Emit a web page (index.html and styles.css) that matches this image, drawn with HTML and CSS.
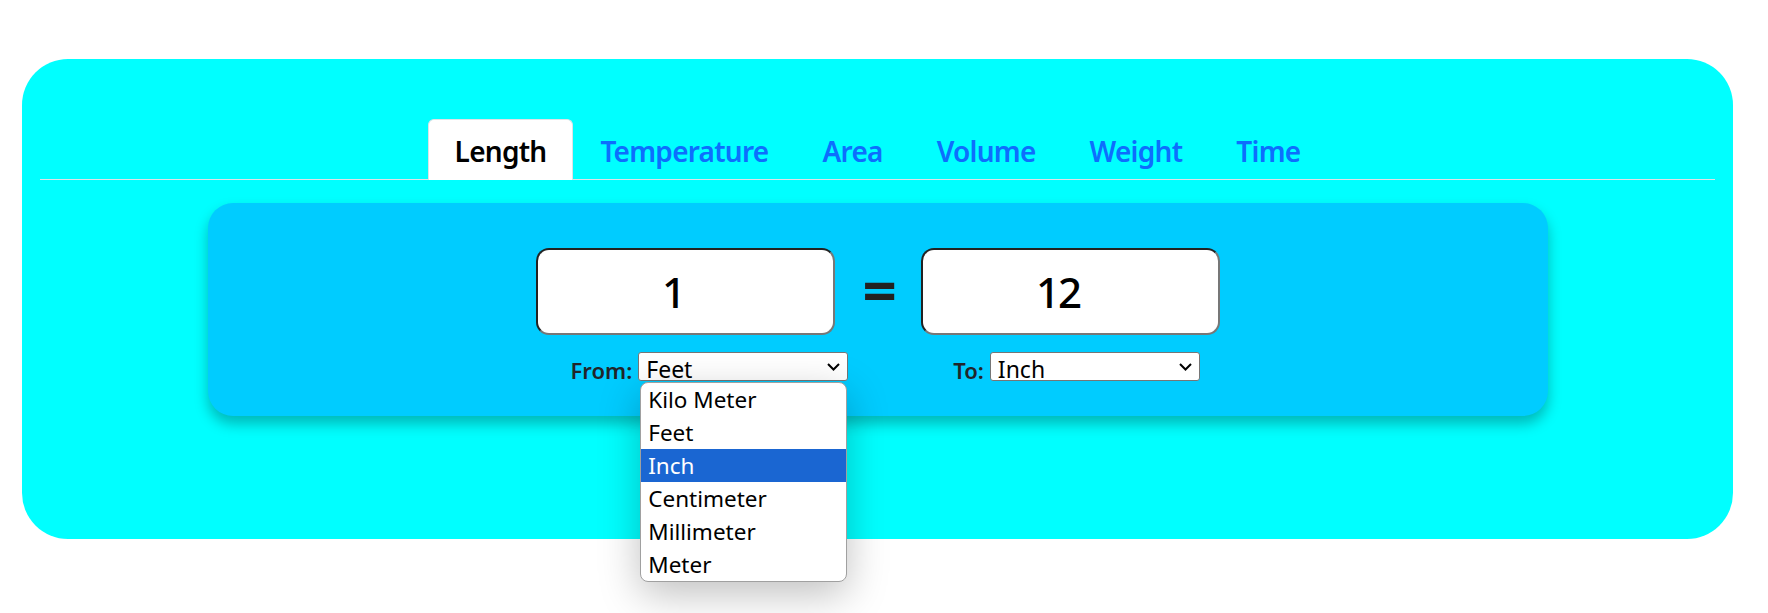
FILE: index.html
```html
<!DOCTYPE html>
<html lang="en">
<head>
<meta charset="utf-8">
<title>Unit Converter</title>
<link rel="stylesheet" href="styles.css">
</head>
<body>
<div class="app">
  <nav class="tabs">
    <a class="tab active">Length</a>
    <a class="tab">Temperature</a>
    <a class="tab">Area</a>
    <a class="tab">Volume</a>
    <a class="tab">Weight</a>
    <a class="tab">Time</a>
  </nav>
  <section class="panel">
    <div class="values">
      <div class="num">1</div>
      <div class="eq">=</div>
      <div class="num">12</div>
    </div>
    <div class="units">
      <div class="group">
        <span class="lbl">From:</span>
        <div class="sel">
          <span class="sel-text">Feet</span>
          <svg class="chev" width="13" height="8" viewBox="0 0 13 8"><path d="M1 1 L6.5 6.5 L12 1" fill="none" stroke="#000" stroke-width="2"/></svg>
          <ul class="dropdown">
            <li>Kilo Meter</li>
            <li>Feet</li>
            <li class="hl">Inch</li>
            <li>Centimeter</li>
            <li>Millimeter</li>
            <li>Meter</li>
          </ul>
        </div>
      </div>
      <div class="group">
        <span class="lbl">To:</span>
        <div class="sel">
          <span class="sel-text">Inch</span>
          <svg class="chev" width="13" height="8" viewBox="0 0 13 8"><path d="M1 1 L6.5 6.5 L12 1" fill="none" stroke="#000" stroke-width="2"/></svg>
        </div>
      </div>
    </div>
  </section>
</div>
</body>
</html>
```
FILE: styles.css
```css
* { box-sizing: border-box; }
html, body { margin: 0; padding: 0; background: #fff; }
body {
  min-height: 613px;
  font-family: "Noto Sans", "Open Sans", sans-serif;
  color: #212529;
}
.app {
  margin: 59px 35px 0 22px;
  background: #00ffff;
  border-radius: 46px;
  padding: 60px 18px 123px 18px;
}
.tabs {
  display: flex;
  justify-content: center;
  height: 61px;
  border-bottom: 1px solid #dee2e6;
}
.tab {
  display: flex;
  align-items: center;
  height: 61px;
  padding: 2px 26px 0;
  font-size: 28px;
  font-weight: 600;
  color: #0d6efd;
  border: 1px solid transparent;
  border-bottom: 0;
  border-radius: 6px 6px 0 0;
  letter-spacing: -0.75px;
}
.tab.active {
  color: #000;
  background: #fff;
  border-color: #dee2e6;
}
.panel {
  width: 1340px;
  margin: 23px auto 0;
  background: #00ccff;
  border-radius: 25px;
  padding: 45px 0 35px;
  box-shadow: 0 8px 14px rgba(0, 0, 0, 0.28);
}
.values {
  display: flex;
  justify-content: center;
  align-items: center;
  gap: 28px;
}
.num {
  width: 299px;
  height: 87px;
  background: #fff;
  border: 2px solid;
  border-color: #222 #777 #777 #222;
  border-radius: 13px;
  display: flex;
  align-items: center;
  justify-content: center;
  padding-right: 24px;
  font-size: 42px;
  font-weight: 500;
  letter-spacing: -2px;
  color: #000;
}
.eq {
  font-size: 60px;
  font-weight: 700;
  color: #222;
  line-height: 1;
  width: 30px;
  text-align: center;
  padding-bottom: 6px;
}
.units {
  display: flex;
  padding-left: 363px;
  margin-top: 17px;
  gap: 105px;
}
.group {
  display: flex;
  align-items: flex-end;
  gap: 6px;
}
.lbl {
  font-size: 22px;
  font-weight: 600;
  line-height: 22px;
  color: #212529;
}
.sel {
  position: relative;
  width: 210px;
  height: 29px;
  background: #fff;
  border: 1px solid #767676;
  border-radius: 3px;
  font-size: 23px;
  color: #000;
  padding: 5px 0 0 7px;
}
.sel-text {
  display: block;
  line-height: 22px;
}
.chev {
  position: absolute;
  right: 7px;
  top: 10px;
}
.dropdown {
  position: absolute;
  left: 1px;
  top: 29px;
  width: 207px;
  margin: 0;
  padding: 0;
  list-style: none;
  background: #fff;
  border: 1px solid #a0a0a0;
  border-radius: 8px;
  overflow: hidden;
  box-shadow: 0 12px 40px rgba(0, 0, 0, 0.25);
  z-index: 10;
}
.dropdown li {
  height: 33px;
  line-height: 33px;
  padding-left: 7px;
  font-size: 22.5px;
  color: #000;
}
.dropdown li.hl {
  background: #1a66d2;
  color: #fff;
}
```
